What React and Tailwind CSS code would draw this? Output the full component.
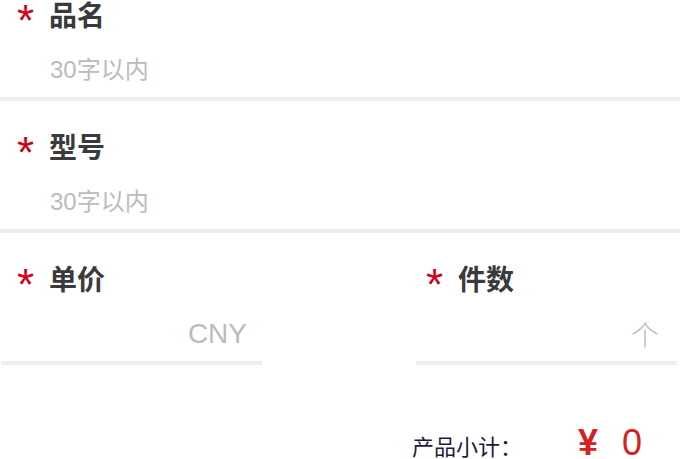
import React from 'react';

const font = "font-['Liberation_Sans','Noto_Sans_CJK_SC',sans-serif]";

function Label({ text, padLeft }) {
  return (
    <div className={`mt-[27px] h-[36px] flex items-center ${padLeft}`}>
      <span className="w-[32px] h-[36px] flex items-start text-[#d0021b] font-['Liberation_Sans',sans-serif]">
        <span className="mt-[3px] text-[44px] leading-none">*</span>
      </span>
      <span className="text-[28px] leading-none font-bold text-[#3a3a3c] font-['Noto_Sans_CJK_SC',sans-serif]">{text}</span>
    </div>
  );
}

function TextRow({ label }) {
  return (
    <div>
      <div className="h-[128px] flex flex-col">
        <Label text={label} padLeft="pl-[17px]" />
        <div className="mt-[18px] h-[40px] flex items-center pl-[50px]">
          <input
            className="w-full bg-transparent outline-none text-[24px] text-[#333] placeholder:text-[#bbbbbb]"
            placeholder="30字以内"
          />
        </div>
      </div>
      <div className="h-[4px] bg-[#eeeeee]" />
    </div>
  );
}

export default function App() {
  return (
    <div className={`w-[680px] h-[459px] overflow-hidden bg-white ${font}`}>
      <div className="-mt-[31px]">
        <TextRow label="品名" />
        <TextRow label="型号" />

        <div className="flex">
          <div className="ml-[1px] w-[261px]">
            <div className="h-[128px] flex flex-col">
              <Label text="单价" padLeft="pl-[16px]" />
              <div className="mt-[18px] h-[40px] flex items-center justify-end pr-[15px]">
                <span className="text-[28px] leading-none text-[#bbbbbb]">CNY</span>
              </div>
            </div>
            <div className="h-[4px] bg-[#eeeeee]" />
          </div>
          <div className="ml-[154px] w-[261px]">
            <div className="h-[128px] flex flex-col">
              <Label text="件数" padLeft="pl-[10px]" />
              <div className="mt-[18px] h-[40px] flex items-center justify-end pr-[18px]">
                <span className="text-[28px] leading-none font-light text-[#bbbbbb] font-['Noto_Sans_CJK_SC',sans-serif]">个</span>
              </div>
            </div>
            <div className="h-[4px] bg-[#eeeeee]" />
          </div>
        </div>

        <div className="mt-[60px] flex items-baseline justify-end pr-[38px]">
          <span className="text-[22px] leading-none text-[#1c1c3a] font-['Noto_Sans_CJK_SC',sans-serif]">产品小计：</span>
          <span className="ml-[56px] text-[36px] leading-none text-[#d42222]">
            <span className="font-semibold">¥</span>
            <span className="ml-[24px]">0</span>
          </span>
        </div>
      </div>
    </div>
  );
}
